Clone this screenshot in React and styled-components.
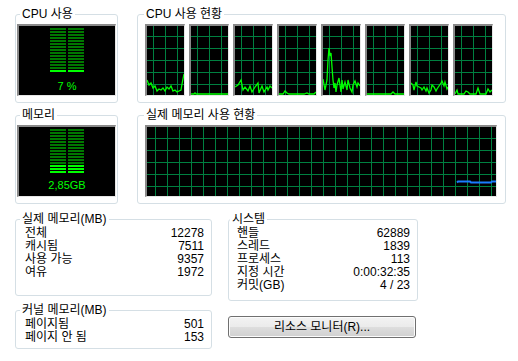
import React from 'react';
import styled, { createGlobalStyle } from 'styled-components';

const Global = createGlobalStyle`
  html, body { margin: 0; padding: 0; background: #fff; }
  body {
    font-family: "Liberation Sans", "Noto Sans CJK KR", sans-serif;
    font-size: 12px;
    color: #000;
  }
`;

const Page = styled.div`
  width: 518px;
  height: 361px;
  box-sizing: border-box;
  padding: 7px 0 0 15px;
  background: #fff;
  overflow: hidden;
`;

const TopGrid = styled.div`
  display: grid;
  grid-template-columns: 103px 369px;
  column-gap: 19px;
  row-gap: 5px;
`;

const BottomGrid = styled.div`
  display: grid;
  grid-template-columns: 197px 190px;
  column-gap: 16px;
  margin-top: 8px;
  align-items: start;
`;

const Column = styled.div`
  display: flex;
  flex-direction: column;
  gap: ${(p) => p.$gap || 0}px;
`;

const Group = styled.fieldset`
  margin: 0;
  padding: 0;
  min-width: 0;
  box-sizing: border-box;
  border: 1px solid #d5dfe5;
  border-radius: 3px;
`;

const Legend = styled.legend`
  font-size: 12px;
  line-height: 14px;
  height: 14px;
  padding: 0 2px;
  margin-left: ${(p) => p.$offset - 3}px;
  white-space: nowrap;
`;

const Body = styled.div`
  padding: ${(p) => p.$pad};
`;

const Screen = styled.div`
  box-sizing: border-box;
  width: ${(p) => p.$w}px;
  height: 72px;
  background: #000;
  border-style: solid;
  border-width: 2px 1px 1px 2px;
  border-color: #8a8a8a #e6e6e6 #e6e6e6 #8a8a8a;
  overflow: hidden;
  svg { display: block; }
`;

const MeterScreen = styled(Screen)`
  display: flex;
  flex-direction: column;
  align-items: center;
  padding-top: 2px;
`;

const MeterText = styled.div`
  margin-top: ${(p) => p.$mt}px;
  font-family: "Liberation Sans", sans-serif;
  font-size: 11px;
  line-height: 12px;
  color: #00ff00;
  white-space: pre;
`;

const GraphRow = styled.div`
  display: flex;
  gap: 4px;
`;

const Rows = styled.div`
  padding: ${(p) => p.$pad};
`;

const Row = styled.div`
  display: flex;
  justify-content: space-between;
  height: 13px;
  line-height: 13px;
  white-space: nowrap;
`;

const Button = styled.button`
  width: 188px;
  height: 22px;
  margin-top: 15px;
  box-sizing: border-box;
  padding: 0;
  border: 1px solid #707070;
  border-radius: 3px;
  background: linear-gradient(#f3f3f3 0%, #ebebeb 48%, #dddddd 52%, #d0d0d0 100%);
  box-shadow: inset 0 0 0 1px #fcfcfc;
  font-family: "Liberation Sans", "Noto Sans CJK KR", sans-serif;
  font-size: 12px;
  line-height: 20px;
  color: #000;
`;

const Meter = ({ lit, text, mt }) => {
  const rows = 15;
  return (
    <MeterScreen $w={99}>
      <svg width="34" height="46" shapeRendering="crispEdges">
        {Array.from({ length: rows }).map((_, i) => {
          const on = i >= rows - lit;
          const fill = on ? '#00ff00' : '#007800';
          return (
            <g key={i}>
              <rect x="0" y={i * 3} width="16" height="2" fill={fill} />
              <rect x="18" y={i * 3} width="16" height="2" fill={fill} />
            </g>
          );
        })}
      </svg>
      <MeterText $mt={mt}>{text}</MeterText>
    </MeterScreen>
  );
};

const GRID = '#008040';

const cpuData = [
  [[0,54],[2,59],[4,57],[6,62],[8,60],[10,65],[12,63],[14,64],[16,62],[18,65],[20,61],[22,63],[24,60],[26,65],[28,64],[30,66],[32,65],[34,64],[35,58],[37,48]],
  [[0,68],[3,68],[4,67],[5,68],[37,68]],
  [[0,61],[3,59],[6,54],[8,64],[10,61],[13,65],[15,60],[17,66],[20,61],[23,57],[24,67],[27,60],[29,66],[32,61],[33,64],[35,60],[37,62]],
  [[0,68],[4,68],[6,65],[8,67],[10,68],[25,68],[28,67],[30,68],[35,68],[37,66]],
  [[0,53],[2,64],[4,54],[5,34],[6,22],[7,30],[8,27],[9,41],[10,54],[11,62],[12,57],[13,66],[14,59],[16,52],[18,66],[19,54],[20,63],[22,56],[24,64],[25,54],[27,62],[29,66],[30,59],[32,55],[34,61],[35,57],[37,60]],
  [[0,68],[24,68],[26,66],[28,68],[37,68]],
  [[0,57],[2,59],[3,64],[5,56],[6,60],[8,61],[10,62],[11,64],[13,61],[15,65],[16,62],[18,67],[20,64],[21,59],[23,61],[25,65],[26,63],[28,60],[30,57],[31,55],[33,60],[34,56],[36,63],[37,61]],
  [[0,68],[1,66],[2,64],[3,68],[9,68],[11,65],[13,66],[15,68],[21,68],[23,62],[25,68],[31,68],[33,63],[35,66],[37,64]],
];

const CpuGraph = ({ points }) => (
  <Screen $w={40}>
    <svg width="37" height="69">
      {[6.5, 18.5, 30.5].map((x) => (
        <line key={'v' + x} x1={x} y1="0" x2={x} y2="69" stroke={GRID} strokeWidth="1" />
      ))}
      {[10.5, 22.5, 34.5, 46.5, 58.5].map((y) => (
        <line key={'h' + y} x1="0" y1={y} x2="37" y2={y} stroke={GRID} strokeWidth="1" />
      ))}
      <polyline
        points={points.map((p) => p.join(',')).join(' ')}
        fill="none"
        stroke="#00ff00"
        strokeWidth="1.3"
      />
    </svg>
  </Screen>
);

const MemGraph = () => {
  const xs = [];
  for (let x = 8.5; x < 349; x += 12) xs.push(x);
  const ys = [11.5, 23.5, 35.5, 47.5, 59.5];
  const blue = [[310,55.5],[311,54.5],[323,54.5],[324,55.5],[344,55.5],[345,54.5],[349,54.5]];
  return (
    <Screen $w={352}>
      <svg width="349" height="69">
        {xs.map((x) => (
          <line key={'v' + x} x1={x} y1="0" x2={x} y2="69" stroke={GRID} strokeWidth="1" />
        ))}
        {ys.map((y) => (
          <line key={'h' + y} x1="0" y1={y} x2="349" y2={y} stroke={GRID} strokeWidth="1" />
        ))}
        <polyline
          points={blue.map((p) => p.join(',')).join(' ')}
          fill="none"
          stroke="#1a7cff"
          strokeWidth="2"
        />
      </svg>
    </Screen>
  );
};

const StatGroup = ({ title, offset, pad, items }) => (
  <Group>
    <Legend $offset={offset}>{title}</Legend>
    <Rows $pad={pad}>
      {items.map(([k, v]) => (
        <Row key={k}>
          <span>{k}</span>
          <span>{v}</span>
        </Row>
      ))}
    </Rows>
  </Group>
);

export default function App() {
  return (
    <>
      <Global />
      <Page>
        <TopGrid>
          <Group>
            <Legend $offset={7}>CPU 사용</Legend>
            <Body $pad="3px 0 6px 1px">
              <Meter lit={1} text="7 %" mt={6} />
            </Body>
          </Group>
          <Group>
            <Legend $offset={9}>CPU 사용 현황</Legend>
            <Body $pad="3px 0 6px 7px">
              <GraphRow>
                {cpuData.map((d, i) => (
                  <CpuGraph key={i} points={d} />
                ))}
              </GraphRow>
            </Body>
          </Group>
          <Group>
            <Legend $offset={7}>메모리</Legend>
            <Body $pad="3px 0 6px 1px">
              <Meter lit={3} text="2,85GB" mt={4} />
            </Body>
          </Group>
          <Group>
            <Legend $offset={9}>실제 메모리 사용 현황</Legend>
            <Body $pad="3px 0 6px 7px">
              <MemGraph />
            </Body>
          </Group>
        </TopGrid>
        <BottomGrid>
          <Column $gap={7}>
            <StatGroup
              title="실제 메모리(MB)"
              offset={7}
              pad="1px 7px 16px 9px"
              items={[
                ['전체', '12278'],
                ['캐시됨', '7511'],
                ['사용 가능', '9357'],
                ['여유', '1972'],
              ]}
            />
            <StatGroup
              title="커널 메모리(MB)"
              offset={7}
              pad="1px 7px 4px 9px"
              items={[
                ['페이지됨', '501'],
                ['페이지 안 됨', '153'],
              ]}
            />
          </Column>
          <Column>
            <StatGroup
              title="시스템"
              offset={4}
              pad="1px 7px 8px 8px"
              items={[
                ['핸들', '62889'],
                ['스레드', '1839'],
                ['프로세스', '113'],
                ['지정 시간', '0:00:32:35'],
                ['커밋(GB)', '4 / 23'],
              ]}
            />
            <Button type="button">리소스 모니터(R)...</Button>
          </Column>
        </BottomGrid>
      </Page>
    </>
  );
}
